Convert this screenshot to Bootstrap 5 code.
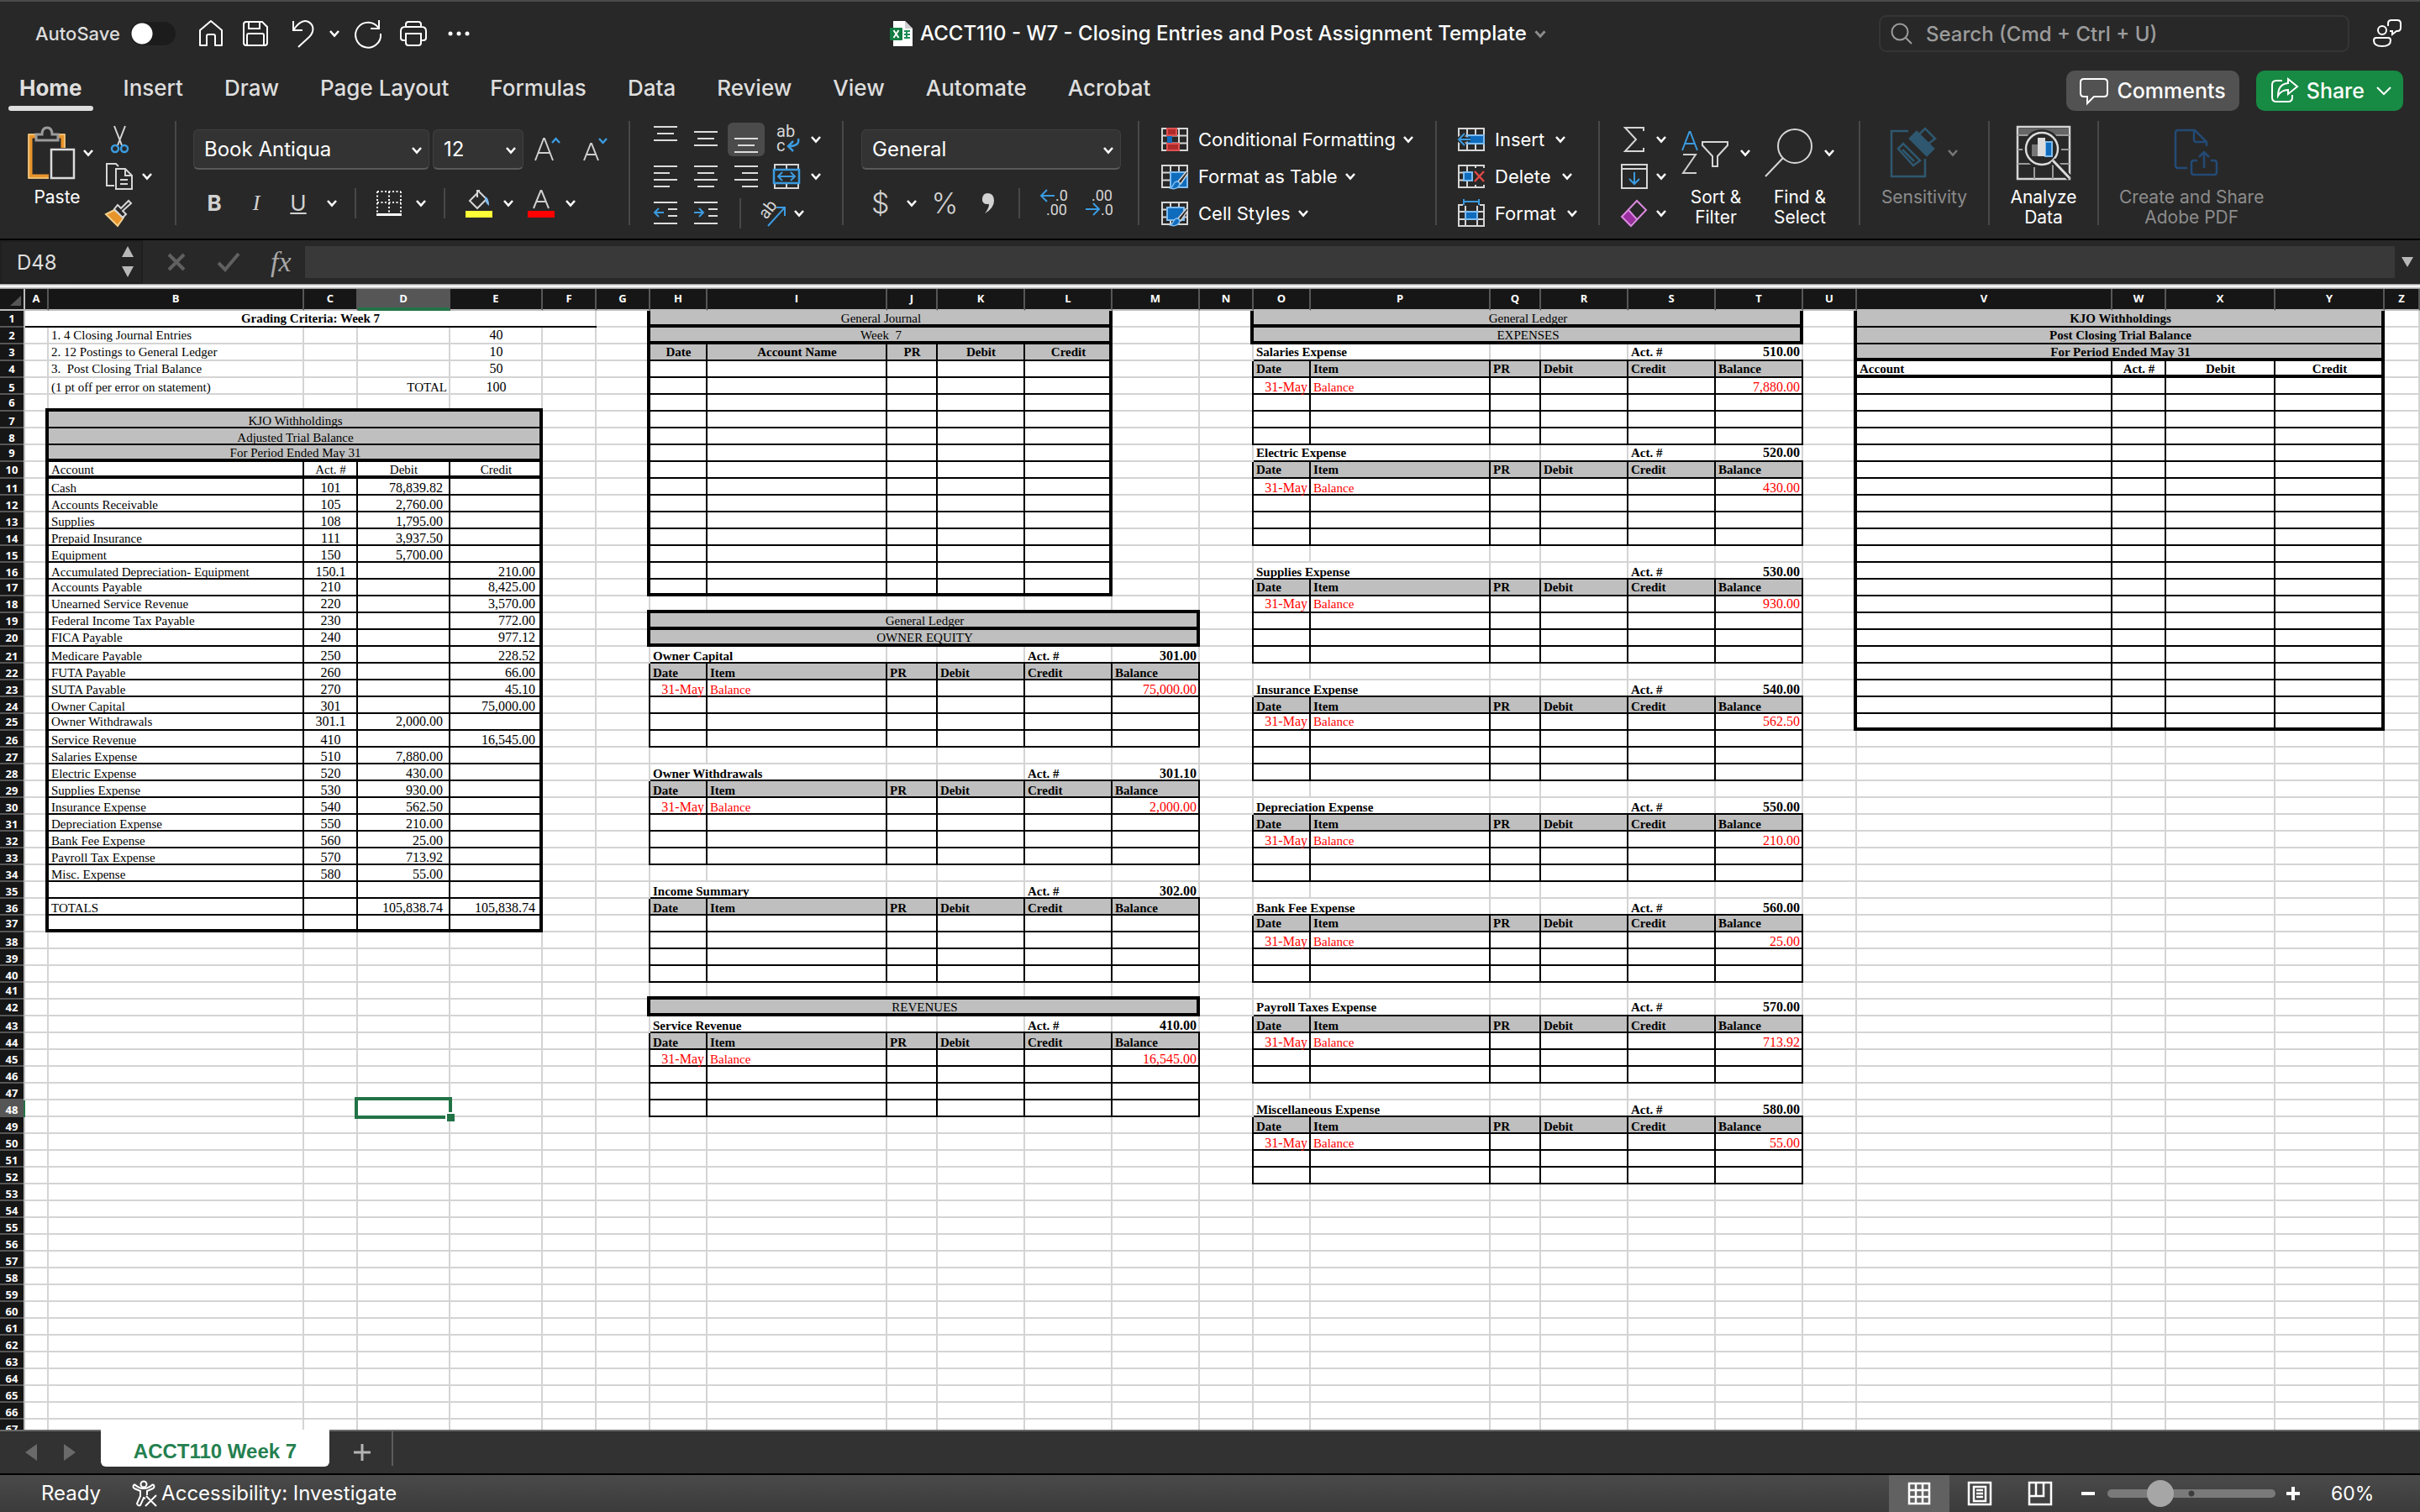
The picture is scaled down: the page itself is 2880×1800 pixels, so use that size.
<!DOCTYPE html>
<html lang="en">
<head>
<meta charset="utf-8">
<meta name="viewport" content="width=device-width, initial-scale=1">
<title>ACCT110 - W7 - Closing Entries and Post Assignment Template</title>
<link href="https://cdn.jsdelivr.net/npm/bootstrap@5.3.0/dist/css/bootstrap.min.css" rel="stylesheet">
<style>
  body { font-family: Inter, "Liberation Sans", sans-serif; background: #282828; color: #fff; font-size: 22px; line-height: 24px; }
  svg { display: block; flex: none; fill: none; stroke: #fff; stroke-width: 2; overflow: visible; }
  button { background: none; border: 0; padding: 0; color: inherit; font: inherit; display: flex; align-items: center; flex: none; }
  .s8 { margin-left: 8px; } .s12 { margin-left: 12px; } .s16 { margin-left: 16px; }
  .s20 { margin-left: 20px; } .s24 { margin-left: 24px; } .s28 { margin-left: 28px; } .s36 { margin-left: 36px; }

  /* title bar */
  .titlebar { height: 80px; border-top: 2px solid #4b4b4b; padding: 0 22px 2px 42px; }
  .side { flex: 1 1 0; }
  .autosave { color: #dcdcdc; font-weight: 500; font-size: 22px; }
  .switch-off { appearance: none; width: 54px; height: 28px; border-radius: 14px; background: radial-gradient(circle at 14px 14px, #fff 12px, #1c1c1c 13px); }
  .doc-title { font-size: 24px; font-weight: 500; white-space: nowrap; }
  .searchbox { width: 560px; height: 44px; border: 2px solid #353535; border-radius: 9px; padding: 0 12px; }
  .searchbox input { background: none; border: 0; outline: 0; width: 100%; font-weight: 500; font-size: 24px; color: #fff; padding: 0; }
  .searchbox input::placeholder { color: #9c9c9c; opacity: 1; }

  /* ribbon tabs */
  .tabs { height: 60px; padding: 0 20px 0 10px; }
  .tab-row { gap: 23px; }
  .tabs .ribbon-tab { color: #dedede; text-decoration: none; font-size: 26px; font-weight: 500; line-height: 32px; padding: 9px 13px 5px; border-bottom: 6px solid transparent; height: 52px; white-space: nowrap; }
  .tabs .ribbon-tab.on { font-weight: 700; position: relative; }
  .tabs .ribbon-tab.on::after { content: ""; position: absolute; left: 0; right: 0; bottom: -6px; height: 6px; border-radius: 3px; background: #dedede; }
  .pill { height: 48px; border-radius: 10px; font-size: 25px; font-weight: 500; padding: 0 16px; gap: 10px; }
  .pill-gray { background: #525252; }
  .pill-green { background: #178a43; padding: 0 14px 0 18px; }

  /* ribbon */
  .ribbon { height: 146px; padding-top: 4px; border-bottom: 2px solid #000; }
  .ribbon .rule { width: 2px; height: 124px; background: #484848; flex: none; }
  .ribbon .rule-s { width: 2px; height: 36px; background: #484848; flex: none; }
  .grp { flex: none; display: flex; white-space: nowrap; }
  .grp-2row { flex-direction: column; gap: 20px; padding-top: 10px; }
  .line-48 { display: flex; align-items: center; height: 48px; }
  .line-40 { display: flex; align-items: center; height: 40px; }
  .line-44 { display: flex; align-items: center; height: 44px; }
  .cell48 { width: 48px; height: 40px; justify-content: center; }
  .cell50 { width: 50px; height: 40px; justify-content: center; font-size: 26px; color: #d2d2d2; }
  .cell48 .pressed { background: #4b4b4b; border-radius: 6px; width: 44px; height: 40px; display: flex; align-items: center; justify-content: center; }
  .big { flex-direction: column; align-items: center; gap: 9px; padding-top: 6px; text-align: center; font-size: 21px; justify-content: flex-start; }
  .big .art { display: flex; align-items: center; height: 64px; }
  .dim { color: #8c8c8c; }
  .picker { position: relative; flex: none; }
  .picker select { appearance: none; width: 100%; height: 48px; background: #333; border: 1px solid #404040; border-bottom: 2px solid #5a5a5a; border-radius: 6px; color: #fff; font-size: 24px; padding: 0 12px; }
  .picker svg { position: absolute; right: 8px; top: 20px; pointer-events: none; }
  .glyph { font-size: 34px; line-height: 40px; color: #d2d2d2; font-weight: 300; }
  .w1 { width: 208px; } .w2 { width: 538px; } .w3 { width: 252px; } .w4 { width: 350px; } .w5 { width: 352px; }
  .w6 { width: 192px; } .w7 { width: 308px; } .w8 { width: 152px; } .w9 { width: 128px; }

  /* formula bar */
  .fbar { height: 52px; background: #282828; }
  .namebox { width: 170px; border: 2px solid #1f1f1f; background: #242424; }
  .namebox input { background: none; border: 0; outline: 0; width: 130px; color: #dedede; font-size: 24px; padding: 0 0 0 18px; }
  .fx { font-family: "Liberation Serif", serif; font-style: italic; font-size: 34px; color: #a8a8a8; }
  .finput { background: #393939; border: 0; outline: 0; height: 38px; color: #fff; padding: 0 8px; min-width: 0; }
  .strip { height: 6px; background: linear-gradient(#8f8f8f, #fff 40%, #f2f2f2 60%, #8a8a8a); flex: none; }

  /* sheet */
  .sheet-area { background: #fff; overflow: hidden; min-height: 0; }
  .sheet { table-layout: fixed; border-collapse: separate; border-spacing: 0; width: 100%; font-family: "Liberation Serif", serif; font-size: 15px; line-height: 18px; color: #000; }
  .sheet tr { height: 20px; }
  .sheet td { height: 20px; padding: 0 4px 0 3px; vertical-align: bottom; white-space: nowrap; overflow: hidden; }
  .sheet tr.lift td, .sheet tbody tr.lift th { vertical-align: top; }
  .sheet th { font-family: "Open Sans", sans-serif; font-weight: 700; font-size: 13px; color: #fff; background: #161616; text-align: center; padding: 0; overflow: hidden; }
  .sheet thead th { height: 26px; line-height: 22px; vertical-align: top; border-right: 2px solid #565656; border-bottom: 2px solid #bcbcbc; }
  .sheet tbody th { height: 20px; line-height: 18px; vertical-align: bottom; border-right: 2px solid #bcbcbc; box-shadow: inset 0 -2px #565656; }
  .sheet thead th:first-child { border-right-color: #bcbcbc; }
  .sheet thead th.sel { background: #565656; border-right-color: #565656; border-bottom: 4px solid #217346; }
  .sheet tbody th.sel { background: #565656; border-right-color: #217346; }
  .corner-mark { margin: 8px 3px 0 auto; width: 0; height: 0; border-left: 13px solid transparent; border-bottom: 12px solid #565656; }
  .r0b0 { box-shadow: inset -2px 0 #d4d4d4, inset 0 -2px #d4d4d4; }
  .r0b1 { box-shadow: inset 0 -2px #000, inset -2px 0 #d4d4d4; }
  .r0b2 { box-shadow: inset 0 -4px #000, inset -2px 0 #d4d4d4; }
  .r1b0 { box-shadow: inset -2px 0 #000, inset 0 -2px #d4d4d4; }
  .r1b1 { box-shadow: inset -2px 0 #000, inset 0 -2px #000; }
  .r1b2 { box-shadow: inset -2px 0 #000, inset 0 -4px #000; }
  .r2b0 { box-shadow: inset -4px 0 #000, inset 0 -2px #d4d4d4; }
  .r2b1 { box-shadow: inset -4px 0 #000, inset 0 -2px #000; }
  .r2b2 { box-shadow: inset -4px 0 #000, inset 0 -4px #000; }
  .sheet .fillg { background: #bfbfbf; }
  .sheet .ce { text-align: center; }
  .sheet .ri { text-align: right; }
  .sheet .acc { text-align: right; padding-right: 9px; }
  .sheet .nu { font-size: 16px; }
  .sheet .bo { font-weight: 700; }
  .sheet .rd { color: #f00; }
  .sheet .joint { position: relative; }
  .sheet .joint::after { content: ""; position: absolute; right: 0; bottom: 0; width: 4px; height: 4px; background: #000; }
  .sheet .active-cell { position: relative; overflow: visible; }
  .sheet .active-cell::before { content: ""; position: absolute; inset: -4px -2px -2px -4px; border: 4px solid #217346; }
  .sheet .active-cell::after { content: ""; position: absolute; right: -5px; bottom: -5px; width: 11px; height: 11px; background: #217346; border: 2px solid #fff; border-right: 0; border-bottom: 0; }

  /* sheet tabs and status bar */
  .sheetbar { height: 52px; background: #323232; border-top: 2px solid #6a6a6a; padding-left: 30px; }
  .sheet-tab { margin: -2px 0 0 30px; width: 272px; height: 44px; background: #fff; border-radius: 0 0 6px 6px; justify-content: center; font-family: "Liberation Sans", sans-serif; font-weight: 700; font-size: 24px; color: #24804f; padding-top: 8px; }
  .sheetbar .rule { width: 2px; height: 41px; background: #5c5c5c; }
  .statusbar { height: 46px; border-top: 2px solid #000; background: linear-gradient(#4a4a4a, #3b3b3b); padding-left: 49px; font-size: 24px; }
  .viewbtn { width: 72px; height: 44px; justify-content: center; }
  .viewbtn.on { background: #616161; }
  .zoomer { appearance: none; width: 200px; height: 32px; margin: 0 0 0 14px; background: none; }
  .zoomer::-webkit-slider-runnable-track { height: 10px; border-radius: 5px; background: radial-gradient(circle at 50% 50%, #3c3c3c 3px, #7a7a7a 4px); }
  .zoomer::-webkit-slider-thumb { appearance: none; width: 32px; height: 32px; margin-top: -11px; border-radius: 50%; background: #a6a6a6; }
  .zoom-value { width: 106px; font-size: 23px; }
</style>
</head>
<body class="d-flex flex-column vh-100 overflow-hidden">

<svg width="0" height="0" class="position-absolute" aria-hidden="true">
  <symbol id="chev" viewBox="0 0 14 10"><path d="M2 2l5 5.500 5-5.500" stroke-width="2.600"/></symbol>
  <symbol id="gridbase" viewBox="0 0 32 30"><path d="M1 2h30v26H1zM1 10.500h30M1 19.500h30M11 2v26M21 2v26" stroke="#d6d6d6"/></symbol>
  <symbol id="brush" viewBox="0 0 24 24"><path d="M23 1L12 14l3 3L24 4z" fill="#282828" stroke="#d6d6d6" stroke-width="1.500"/><path d="M11 14c-5 0-4 6-8 8 6 2 11-1 11-6z" fill="#0f6cbd" stroke="#7fbcf0" stroke-width="1.500"/></symbol>
</svg>

<header class="titlebar d-flex align-items-center flex-shrink-0">
  <div class="side d-flex align-items-center">
    <label class="autosave" for="autosave">AutoSave</label>
    <input type="checkbox" id="autosave" class="switch-off s12">
    <button class="s28" aria-label="Home"><svg width="28" height="32" viewBox="0 0 28 32"><path d="M1 30V12L14 1l13 11v18h-8V19q0-2-2-2h-6q-2 0-2 2v11z" stroke-linejoin="round"/></svg></button>
    <button class="s24" aria-label="Save"><svg width="30" height="30" viewBox="0 0 30 30"><path d="M4 1h19l6 6v19q0 3-3 3H4q-3 0-3-3V4q0-3 3-3zM7 1v8h13V1M5 29V17q0-2 2-2h16q2 0 2 2v12"/></svg></button>
    <button class="s28" aria-label="Undo"><svg width="28" height="34" viewBox="0 0 28 34"><path d="M2 2v11h11M2 13C8 4 14 0 20 3s8 11 1 18L8 33"/></svg></button>
    <button class="s16" aria-label="Undo list"><svg width="14" height="10"><use href="#chev"/></svg></button>
    <button class="s16" aria-label="Redo"><svg width="34" height="34" viewBox="0 0 34 34"><path d="M30 1v10H20M30 11a15 15 0 1 0 2 6"/></svg></button>
    <button class="s20" aria-label="Print"><svg width="34" height="32" viewBox="0 0 34 32"><path d="M8 8V5q0-3 3-3h12q3 0 3 3v3M8 24H5q-3 0-3-3v-8q0-5 5-5h20q5 0 5 5v8q0 3-3 3h-3M8 16h18v11q0 3-3 3H11q-3 0-3-3z"/></svg></button>
    <button class="s24" aria-label="More"><svg width="26" height="6" viewBox="0 0 26 6"><g fill="#fff" stroke="none"><circle cx="3" cy="3" r="2.500"/><circle cx="13" cy="3" r="2.500"/><circle cx="23" cy="3" r="2.500"/></g></svg></button>
  </div>
  <div class="d-flex align-items-center">
    <svg width="28" height="30" viewBox="0 0 28 30"><path d="M4 0h14l9 9v21H4z" fill="#fff" stroke="none"/><path d="M18 0l9 9h-9z" fill="#cfcfcf" stroke="none"/><path d="M17 12h7M17 16h7M17 20h7M20 11v10" stroke="#1e8e55" stroke-width="2"/><rect x="0" y="8" width="15" height="15" rx="1" fill="#107c41" stroke="none"/><path d="M4.500 11l6 9M10.500 11l-6 9" stroke-width="2"/></svg>
    <h1 class="doc-title m-0 ms-2">ACCT110 - W7 - Closing Entries and Post Assignment Template</h1>
    <button class="s8" aria-label="Document menu"><svg width="16" height="11" viewBox="0 0 14 10" style="stroke:#8c8c8c"><use href="#chev"/></svg></button>
  </div>
  <div class="side d-flex align-items-center justify-content-end">
    <div class="searchbox d-flex align-items-center gap-3">
      <svg width="26" height="26" viewBox="0 0 26 26" style="stroke:#9c9c9c"><circle cx="11" cy="11" r="9.500"/><path d="M18 18l7 7"/></svg>
      <input type="text" aria-label="Search" placeholder="Search (Cmd + Ctrl + U)">
    </div>
    <button class="s28" aria-label="Collaborators"><svg width="34" height="34" viewBox="0 0 34 34"><circle cx="11" cy="13" r="5"/><path d="M4 22h14q3 0 3 3 0 7-10 7T1 25q0-3 3-3zM18 8V5q0-4 4-4h7q4 0 4 4v5q0 4-4 4h-1l-5 4v-4h-3"/></svg></button>
  </div>
</header>

<nav class="tabs d-flex flex-shrink-0">
  <div class="tab-row d-flex align-items-start me-auto">
    <a href="#" class="ribbon-tab on">Home</a><a href="#" class="ribbon-tab">Insert</a><a href="#" class="ribbon-tab">Draw</a><a href="#" class="ribbon-tab">Page Layout</a><a href="#" class="ribbon-tab">Formulas</a><a href="#" class="ribbon-tab">Data</a><a href="#" class="ribbon-tab">Review</a><a href="#" class="ribbon-tab">View</a><a href="#" class="ribbon-tab">Automate</a><a href="#" class="ribbon-tab">Acrobat</a>
  </div>
  <div class="d-flex pt-1">
    <button class="pill pill-gray"><svg width="34" height="32" viewBox="0 0 34 32"><path d="M5 2h24q4 0 4 4v13q0 4-4 4H17l-8 8v-8H5q-4 0-4-4V6q0-4 4-4z"/></svg>Comments</button>
    <button class="pill pill-green s20"><svg width="32" height="30" viewBox="0 0 32 30"><path d="M13 3H6Q1 3 1 8v15q0 5 5 5h14q5 0 5-5v-3M20 1l11 9-11 9v-5q-8 0-12 7 0-14 12-15z"/></svg>Share<svg width="18" height="12" viewBox="0 0 18 12" class="ms-1"><path d="M1 2l8 8 8-8"/></svg></button>
  </div>
</nav>

<section class="ribbon d-flex flex-shrink-0 align-items-start">
  <div class="grp w1" style="padding-left:32px">
    <button class="big"><span class="art"><svg width="58" height="64" viewBox="0 0 58 64"><path d="M14 12H4v48h22M36 12h7v14" stroke="#e8942c" stroke-width="5"/><path d="M12 10H2v52h24M36 10h9v16" stroke="#f6d18b" stroke-width="1.500"/><path d="M11 17v-7h7q0-8 6-8t6 8h7v7z" fill="#282828" stroke="#9a9a9a" stroke-width="3"/><path d="M29 28h27v34H29z" fill="#282828" stroke="#dcdcdc" stroke-width="2.500"/></svg><svg class="s8" width="14" height="10"><use href="#chev"/></svg></span><span class="pe-2">Paste</span></button>
    <div class="s12">
      <div class="line-44"><button aria-label="Cut"><svg width="36" height="34" viewBox="0 0 36 34"><path d="M12 1l9 23M25 1l-9 23" stroke="#d6d6d6"/><circle cx="13" cy="28" r="4" stroke="#3b9be0" stroke-width="2.500"/><circle cx="24" cy="28" r="4" stroke="#3b9be0" stroke-width="2.500"/></svg></button></div>
      <div class="line-44"><button aria-label="Copy"><svg width="36" height="34" viewBox="0 0 36 34"><path d="M12 28H3V2h11l3 3" stroke="#d6d6d6"/><path d="M14 8h11l8 8v16H14zM25 8v8h8M19 21h9M19 26h9" stroke="#d6d6d6"/></svg></button><button class="s8" aria-label="Copy menu"><svg width="14" height="10"><use href="#chev"/></svg></button></div>
      <div class="line-44"><button aria-label="Format painter"><svg width="36" height="34" viewBox="0 0 36 34"><path d="M2 18l14 14 7-10-11-9z" fill="#e8942c" stroke="#f6d18b"/><path d="M12 12l10 10 4-4-4-4 10-9-3-3-9 9-4-4z" fill="#282828" stroke="#d6d6d6"/></svg></button></div>
    </div>
  </div>
  <div class="rule"></div>

  <div class="grp grp-2row w2" style="padding-left:20px">
    <div class="line-48">
      <div class="picker" style="width:281px"><select aria-label="Font"><option>Book Antiqua</option></select><svg width="14" height="10"><use href="#chev"/></svg></div>
      <div class="picker ms-1" style="width:108px"><select aria-label="Font size"><option>12</option></select><svg width="14" height="10"><use href="#chev"/></svg></div>
      <button class="s12" aria-label="Increase font size"><svg width="34" height="34" viewBox="0 0 34 34"><path d="M2 30L12 4h1l10 26M6 21h13" stroke="#cfcfcf"/><path d="M22 9l4.500-5 4.500 5" stroke="#3b9be0" stroke-width="2.500"/></svg></button>
      <button class="s24" aria-label="Decrease font size"><svg width="32" height="34" viewBox="0 0 32 34"><path d="M2 30L10 10h1l8 20M5 23h11" stroke="#cfcfcf"/><path d="M20 4l4.500 5 4.500-5" stroke="#3b9be0" stroke-width="2.500"/></svg></button>
    </div>
    <div class="line-40">
      <button class="cell50"><b>B</b></button><button class="cell50"><i style="font-family:'Liberation Serif',serif">I</i></button><button class="cell50"><u>U</u></button>
      <button class="s8" aria-label="Underline menu"><svg width="14" height="10"><use href="#chev"/></svg></button>
      <div class="rule-s s20"></div>
      <button class="s24" aria-label="Borders"><svg width="30" height="32" viewBox="0 0 30 32"><path d="M1 2h28M1 15h28M1 2v26M15 2v26M29 2v26" stroke-dasharray="2 2.500"/><path d="M0 29.500h30" stroke-width="3"/></svg></button>
      <button class="s16" aria-label="Borders menu"><svg width="14" height="10"><use href="#chev"/></svg></button>
      <div class="rule-s s20"></div>
      <button class="s24" aria-label="Fill colour"><svg width="32" height="34" viewBox="0 0 32 34"><path d="M14 5L5 14l9 9 11-11-9-9V1M14 1v9" stroke="#d6d6d6"/><path d="M23 9q5 1 5 11-5-3-5-11z" fill="#7fbcf0" stroke="none"/><path d="M0 26h32v8H0z" fill="#ffff37" stroke="none"/></svg></button>
      <button class="s12" aria-label="Fill menu"><svg width="14" height="10"><use href="#chev"/></svg></button>
      <button class="s16" aria-label="Font colour"><svg width="32" height="34" viewBox="0 0 32 34"><path d="M7 23l8.500-21h1L25 23M10 15h12" stroke="#cfcfcf"/><path d="M0 26h32v8H0z" fill="#f00" stroke="none"/></svg></button>
      <button class="s12" aria-label="Font colour menu"><svg width="14" height="10"><use href="#chev"/></svg></button>
    </div>
  </div>
  <div class="rule"></div>

  <div class="grp flex-column w3" style="padding-left:18px">
    <div class="line-44">
      <button class="cell48" aria-label="Top align"><svg width="28" height="32" viewBox="0 0 28 32"><path d="M0 1h28M4 9h20M0 17h28" stroke="#dcdcdc"/></svg></button>
      <button class="cell48" aria-label="Middle align"><svg width="28" height="32" viewBox="0 0 28 32"><path d="M0 7h28M4 15h20M0 23h28" stroke="#dcdcdc"/></svg></button>
      <button class="cell48" aria-label="Bottom align"><span class="pressed"><svg width="28" height="32" viewBox="0 0 28 32"><path d="M0 15h28M4 23h20M0 31h28" stroke="#dcdcdc"/></svg></span></button>
      <button class="s8" aria-label="Wrap text"><svg width="32" height="40" viewBox="0 0 32 40"><g stroke="none" fill="#d6d6d6" font-family="Roboto, sans-serif" font-size="20"><text x="4" y="17">ab</text><text x="4" y="34">c</text></g><path d="M30 19q2 9-11 9M24 22l-6 6 6 6" stroke="#3b9be0" stroke-width="2.500"/></svg></button>
      <button class="s12" aria-label="Wrap menu"><svg width="14" height="10"><use href="#chev"/></svg></button>
    </div>
    <div class="line-44">
      <button class="cell48" aria-label="Align left"><svg width="28" height="28" viewBox="0 0 28 28"><path d="M0 2h28M0 10h19M0 18h28M0 26h19" stroke="#dcdcdc"/></svg></button>
      <button class="cell48" aria-label="Centre"><svg width="28" height="28" viewBox="0 0 28 28"><path d="M0 2h28M4 10h20M0 18h28M4 26h20" stroke="#dcdcdc"/></svg></button>
      <button class="cell48" aria-label="Align right"><svg width="28" height="28" viewBox="0 0 28 28"><path d="M0 2h28M9 10h19M0 18h28M9 26h19" stroke="#dcdcdc"/></svg></button>
      <button class="s8" aria-label="Merge and centre"><svg width="32" height="32" viewBox="0 0 32 32"><path d="M2 2h28v28H2zM16 2v6M16 24v6" stroke="#d6d6d6"/><path d="M1 8h30v16H1z" fill="#282828" stroke="#3b9be0" stroke-width="2.500"/><path d="M6 16h20M11 11l-5 5 5 5M21 11l5 5-5 5" stroke="#3b9be0"/></svg></button>
      <button class="s12" aria-label="Merge menu"><svg width="14" height="10"><use href="#chev"/></svg></button>
    </div>
    <div class="line-44">
      <button class="cell48" aria-label="Decrease indent"><svg width="28" height="28" viewBox="0 0 28 28"><path d="M0 1h28M17 9h11M17 17h11M0 26h28" stroke="#dcdcdc"/><path d="M1 13h11M6 8l-5 5 5 5" stroke="#3b9be0"/></svg></button>
      <button class="cell48" aria-label="Increase indent"><svg width="28" height="28" viewBox="0 0 28 28"><path d="M0 1h28M17 9h11M17 17h11M0 26h28" stroke="#dcdcdc"/><path d="M0 13h11M6 8l5 5-5 5" stroke="#3b9be0"/></svg></button>
      <div class="rule-s s16"></div>
      <button class="s20" aria-label="Orientation"><svg width="34" height="34" viewBox="0 0 34 34"><text x="0" y="0" transform="translate(10 25) rotate(-52)" font-family="Roboto, sans-serif" font-size="20" fill="#d6d6d6" stroke="none">ab</text><path d="M12 32l20-22M22 10h10v10" stroke="#3b9be0"/></svg></button>
      <button class="s8" aria-label="Orientation menu"><svg width="14" height="10"><use href="#chev"/></svg></button>
    </div>
  </div>
  <div class="rule"></div>

  <div class="grp grp-2row w4" style="padding-left:21px">
    <div class="line-48"><div class="picker" style="width:309px"><select aria-label="Number format"><option>General</option></select><svg width="14" height="10"><use href="#chev"/></svg></div></div>
    <div class="line-40">
      <button class="glyph s12">$</button><button class="s20" aria-label="Currency menu"><svg width="14" height="10"><use href="#chev"/></svg></button>
      <button class="glyph s16">%</button>
      <button class="s28" aria-label="Comma style"><svg width="16" height="26" viewBox="0 0 16 26"><path d="M7 1q8 0 8 9 0 9-11 15 5-6 5-11Q0 15 1 7q1-6 6-6z" fill="#d2d2d2" stroke="none"/></svg></button>
      <div class="rule-s s28"></div>
      <button class="s24" aria-label="Increase decimal"><svg width="34" height="38" viewBox="0 0 34 38"><g stroke="none" fill="#d6d6d6" font-family="Roboto, sans-serif" font-size="18"><text x="18" y="16">.0</text><text x="7" y="33">.00</text></g><path d="M1 10h16M8 3l-7 7 7 7" stroke="#3b9be0"/></svg></button>
      <button class="s20" aria-label="Decrease decimal"><svg width="34" height="38" viewBox="0 0 34 38"><g stroke="none" fill="#d6d6d6" font-family="Roboto, sans-serif" font-size="18"><text x="7" y="16">.00</text><text x="18" y="33">.0</text></g><path d="M0 26h16M9 19l7 7-7 7" stroke="#3b9be0"/></svg></button>
    </div>
  </div>
  <div class="rule"></div>

  <div class="grp flex-column w5" style="padding-left:26px">
    <button class="line-44"><svg width="32" height="30" viewBox="0 0 32 30"><use href="#gridbase"/><path d="M7 2h11v8H7zM7 20h14v8H7z" fill="#b02a2a" stroke="#e05050"/><path d="M7 11h6v8H7z" fill="#0f6cbd" stroke="none"/></svg><span class="s12">Conditional Formatting</span><svg class="s8" width="14" height="10"><use href="#chev"/></svg></button>
    <button class="line-44"><svg width="32" height="30" viewBox="0 0 32 30"><use href="#gridbase"/><path d="M11 10h20v18H11z" fill="#0f6cbd" stroke="#7fbcf0"/><use href="#brush" x="8" y="7" width="24" height="24"/></svg><span class="s12">Format as Table</span><svg class="s8" width="14" height="10"><use href="#chev"/></svg></button>
    <button class="line-44"><svg width="32" height="30" viewBox="0 0 32 30"><use href="#gridbase"/><path d="M7 8h20v15H7z" fill="#0f6cbd" stroke="#7fbcf0"/><use href="#brush" x="8" y="7" width="24" height="24"/></svg><span class="s12">Cell Styles</span><svg class="s8" width="14" height="10"><use href="#chev"/></svg></button>
  </div>
  <div class="rule"></div>

  <div class="grp flex-column w6" style="padding-left:25px">
    <button class="line-44"><svg width="32" height="30" viewBox="0 0 32 30"><use href="#gridbase"/><path d="M11 10h20v10H11z" fill="#0f6cbd" stroke="#7fbcf0"/><path d="M0 15h15M8 8l-7 7 7 7" stroke="#282828" stroke-width="5"/><path d="M1 15h14M8 8l-7 7 7 7" stroke="#3b9be0"/></svg><span class="s12">Insert</span><svg class="s12" width="14" height="10"><use href="#chev"/></svg></button>
    <button class="line-44"><svg width="32" height="30" viewBox="0 0 32 30"><use href="#gridbase"/><path d="M17 5h16v20H17z" fill="#282828" stroke="none"/><path d="M7 10h10v10H7z" fill="#0f6cbd" stroke="#7fbcf0"/><path d="M20 9l11 12M31 9L20 21" stroke="#e04848" stroke-width="2.500"/></svg><span class="s12">Delete</span><svg class="s12" width="14" height="10"><use href="#chev"/></svg></button>
    <button class="line-44"><svg width="32" height="34" viewBox="0 0 32 34"><path d="M6 7H1v25h30V7h-5M1 15h30M1 24h30M9 8v24M23 8v24" stroke="#d6d6d6"/><path d="M9 15h14v9H9z" fill="#0f6cbd" stroke="#7fbcf0"/><path d="M7 3h18M7 0v7M25 0v7" stroke="#3b9be0"/></svg><span class="s12">Format</span><svg class="s12" width="14" height="10"><use href="#chev"/></svg></button>
  </div>
  <div class="rule"></div>

  <div class="grp w7" style="padding-left:24px">
    <div>
      <div class="line-44"><button aria-label="AutoSum"><svg width="34" height="30" viewBox="0 0 34 30"><path d="M28 5V1H6l13 14L6 29h22v-4" stroke="#d6d6d6"/></svg></button><button class="s8" aria-label="AutoSum menu"><svg width="14" height="10"><use href="#chev"/></svg></button></div>
      <div class="line-44"><button aria-label="Fill"><svg width="34" height="30" viewBox="0 0 34 30"><path d="M2 1h30v28H2zM2 6h30" stroke="#d6d6d6"/><path d="M17 10v14M11 18l6 6 6-6" stroke="#3b9be0"/></svg></button><button class="s8" aria-label="Fill menu"><svg width="14" height="10"><use href="#chev"/></svg></button></div>
      <div class="line-44"><button aria-label="Clear"><svg width="34" height="32" viewBox="0 0 34 32"><path d="M2 20l8-8 10 10-9 9z" fill="#9b2fa0" stroke="none"/><path d="M2 20L20 1l11 11-18 19zM10 12l10 11" stroke="#dc8ae0"/></svg></button><button class="s8" aria-label="Clear menu"><svg width="14" height="10"><use href="#chev"/></svg></button></div>
    </div>
    <button class="big s16"><span class="art"><svg width="58" height="60" viewBox="0 0 58 60"><path d="M2 27L10.500 5h1L20 27M5 19h12" stroke="#3b9be0"/><path d="M3 32h15L3 54h16" stroke="#cfcfcf"/><path d="M26 17h30v4L44 34v12h-6V34L26 21z" stroke="#d6d6d6"/></svg><svg class="s12" width="14" height="10"><use href="#chev"/></svg></span><span>Sort &amp;<br>Filter</span></button>
    <button class="big s16"><span class="art"><svg width="58" height="60" viewBox="0 0 58 60"><circle cx="36" cy="22" r="20" stroke="#d6d6d6"/><path d="M22 36L1 58" stroke="#d6d6d6"/></svg><svg class="s12" width="14" height="10"><use href="#chev"/></svg></span><span>Find &amp;<br>Select</span></button>
  </div>
  <div class="rule"></div>

  <div class="grp w8 justify-content-center">
    <button class="big dim" disabled><span class="art"><svg width="56" height="62" viewBox="0 0 56 62"><g stroke="#2f5870" stroke-width="2.500"><path d="M22 5H2v54h40V38"/><path d="M10 26l6-6 20 20-8 6zM15 27l14 14"/><path d="M24 14l8-8 20 20-8 8z" fill="#2f5870"/><path d="M34 10l8-8 12 12-8 6z"/></g></svg><svg class="s12" width="14" height="10" style="stroke:#777"><use href="#chev"/></svg></span>Sensitivity</button>
  </div>
  <div class="rule"></div>

  <div class="grp w9 justify-content-center">
    <button class="big"><span class="art"><svg width="64" height="64" viewBox="0 0 64 64"><path d="M1 1h62v62H1z" stroke="#d6d6d6" stroke-width="2.500"/><path d="M2 3h60v7H2z" fill="#666" stroke="none"/><path d="M1 11h62M1 28h12M52 28h11M1 45h62M21 49v14M43 45v18" stroke="#9a9a9a"/><circle cx="30" cy="27" r="22" fill="#282828" stroke="#282828"/><circle cx="30" cy="27" r="19" stroke="#dcdcdc" stroke-width="2.500"/><path d="M18 22h8v14h-8z" fill="#777" stroke="none"/><path d="M34 19h8v17h-8z" fill="#0f6cbd" stroke="#7fbcf0"/><path d="M25 14h9v22h-9z" fill="#dcdcdc" stroke="none"/><path d="M43 41l20 21" stroke="#282828" stroke-width="7"/><path d="M43 41l20 21" stroke="#dcdcdc" stroke-width="3"/></svg></span><span>Analyze<br>Data</span></button>
  </div>
  <div class="rule"></div>

  <div class="grp s24">
    <button class="big dim" disabled><span class="art"><svg width="52" height="60" viewBox="0 0 52 60" class="s12"><g stroke="#234a75" stroke-width="2.500" stroke-linejoin="round"><path d="M15 48H4q-3 0-3-3V6q0-3 3-3h20l14 14v5M23 3v11q0 3 3 3h12"/><path d="M27 39h-4q-3 0-3 3v11q0 3 3 3h24q3 0 3-3V42q0-3-3-3h-4M35 48V30M29 35l6-6 6 6"/></g></svg></span><span>Create and Share<br>Adobe PDF</span></button>
  </div>
</section>

<div class="fbar d-flex align-items-center flex-shrink-0">
  <div class="namebox d-flex align-items-center align-self-stretch">
    <input type="text" aria-label="Name box" value="D48">
    <svg class="s12" width="16" height="38" viewBox="0 0 16 38"><path d="M8 0l7 13H1zM8 37l7-13H1z" fill="#b8b8b8" stroke="none"/></svg>
  </div>
  <button class="s28" aria-label="Cancel"><svg width="24" height="22" viewBox="0 0 24 22"><path d="M3 2l18 18M21 2L3 20" style="stroke:#606060;stroke-width:4"/></svg></button>
  <button class="s36" aria-label="Enter"><svg width="28" height="22" viewBox="0 0 28 22"><path d="M2 12l8 8L26 1" style="stroke:#606060;stroke-width:4"/></svg></button>
  <button class="fx s36">fx</button>
  <input type="text" class="finput s16 flex-fill" aria-label="Formula bar">
  <button class="s8 me-2" aria-label="Expand formula bar"><svg width="14" height="12" viewBox="0 0 14 12"><path d="M0 0h14L7 12z" fill="#b8b8b8" stroke="none"/></svg></button>
</div>
<div class="strip"></div>

<main class="sheet-area flex-fill">
  <table class="sheet" id="sheet"></table>
</main>

<footer class="flex-shrink-0">
  <div class="sheetbar d-flex align-items-start">
    <button class="align-self-center" aria-label="Previous sheet"><svg width="14" height="20" viewBox="0 0 14 20"><path d="M14 0v20L0 10z" fill="#6a6a6a" stroke="none"/></svg></button>
    <button class="align-self-center" style="margin-left:32px" aria-label="Next sheet"><svg width="14" height="20" viewBox="0 0 14 20"><path d="M0 0v20l14-10z" fill="#6a6a6a" stroke="none"/></svg></button>
    <button class="sheet-tab">ACCT110 Week 7</button>
    <button class="s28 align-self-center" aria-label="Add sheet"><svg width="22" height="22" viewBox="0 0 22 22"><path d="M11 1v20M1 11h20" stroke="#b4b4b4" stroke-width="3"/></svg></button>
    <div class="rule s24"></div>
  </div>
  <div class="statusbar d-flex align-items-center">
    <span>Ready</span>
    <button class="s36"><svg width="32" height="32" viewBox="0 0 32 32"><circle cx="15" cy="5" r="3.500"/><path d="M4 5q-3 3 0 5l7 3v6L7 28q1 3 4 2l4-9 2 1M26 5q3 3 0 5l-7 3v5M4 5q5 5 11 5t11-5M18 19l12 12M30 18L17 31"/></svg><span class="ms-1">Accessibility: Investigate</span></button>
    <button class="viewbtn on ms-auto" aria-label="Normal view"><svg width="28" height="28" viewBox="0 0 28 28"><path d="M2 2h24v24H2zM2 10h24M2 18h24M10 2v24M18 2v24" stroke-width="2.500"/></svg></button>
    <button class="viewbtn" aria-label="Page layout view"><svg width="28" height="28" viewBox="0 0 28 28"><path d="M1 1h26v26H1zM7 6h14v17H7zM10 10h8M10 14h8M10 18h8" stroke-width="2.500"/></svg></button>
    <button class="viewbtn" aria-label="Page break view"><svg width="28" height="28" viewBox="0 0 28 28"><path d="M1 1h26v26H1zM1 17h17V1M9 1v16" stroke-width="2.500"/></svg></button>
    <button class="s12" aria-label="Zoom out"><svg width="18" height="18" viewBox="0 0 18 18"><path d="M1 9h16" stroke-width="4"/></svg></button>
    <input type="range" class="zoomer" min="0" max="100" value="28" aria-label="Zoom">
    <button class="s12" aria-label="Zoom in"><svg width="18" height="18" viewBox="0 0 18 18"><path d="M1 9h16M9 1v16" stroke-width="4"/></svg></button>
    <button class="s36 zoom-value">60%</button>
  </div>
</footer>

<script>
  const NAMES = 'ABCDEFGHIJKLMNOPQRSTUVWXYZ';
  const WIDTHS = [28,304,64,110,110,64,64,68,214,60,104,104,104,64,68,214,60,104,104,104,64,304,64,130,130];
  const LAST = 67;
  const col = l => NAMES.indexOf(l);
  const cells = {};
  for (let r = 0; r <= LAST; r++) for (let c = -1; c < 26; c++) cells[r + ':' + c] = { t: '', k: '', span: 1, R: 0, B: 0 };
  const at = (r, c) => cells[r + ':' + c];
  const put = (r, l, t, k = '', span = 1) => Object.assign(at(r, col(l)), { t, k: at(r, col(l)).k + ' ' + k, span });

  // Thin rules round every cell of a block
  function lattice(r1, r2, a, b) {
    for (let r = r1; r <= r2; r++) for (let c = col(a) - 1; c <= col(b); c++) at(r, c).R = Math.max(at(r, c).R, 1);
    for (let r = r1 - 1; r <= r2; r++) for (let c = col(a); c <= col(b); c++) at(r, c).B = Math.max(at(r, c).B, 1);
  }
  // Thick outline round a block
  function outline(r1, r2, a, b) {
    for (let r = r1; r <= r2; r++) { at(r, col(a) - 1).R = 2; at(r, col(b)).R = 2; }
    for (let c = col(a); c <= col(b); c++) { at(r1 - 1, c).B = 2; at(r2, c).B = 2; }
    at(r1 - 1, col(a) - 1).k += ' joint';
  }
  const banner = (r, a, b, t, k = '') => put(r, a, t, 'fillg ce ' + k, col(b) - col(a) + 1);

  // Grading criteria
  put(1, 'A', 'Grading Criteria: Week 7', 'bo ce', 6); at(1, 0).B = 1;
  [['1. 4 Closing Journal Entries', 40], ['2. 12 Postings to General Ledger', 10], ['3.&nbsp; Post Closing Trial Balance', 50], ['(1 pt off per error on statement)', 100]]
    .forEach(([t, n], i) => { put(i + 2, 'B', t); put(i + 2, 'E', n, 'ce nu'); });
  put(5, 'D', 'TOTAL', 'ri');

  // Adjusted trial balance
  lattice(7, 37, 'B', 'E'); outline(7, 9, 'B', 'E'); outline(10, 10, 'B', 'E'); outline(11, 37, 'B', 'E');
  banner(7, 'B', 'E', 'KJO Withholdings'); banner(8, 'B', 'E', 'Adjusted Trial Balance'); banner(9, 'B', 'E', 'For Period Ended May 31');
  put(10, 'B', 'Account'); put(10, 'C', 'Act. #', 'ce'); put(10, 'D', 'Debit', 'ce'); put(10, 'E', 'Credit', 'ce');
  [['Cash', '101', '78,839.82'], ['Accounts Receivable', '105', '2,760.00'], ['Supplies', '108', '1,795.00'], ['Prepaid Insurance', '111', '3,937.50'],
   ['Equipment', '150', '5,700.00'], ['Accumulated Depreciation- Equipment', '150.1', '', '210.00'], ['Accounts Payable', '210', '', '8,425.00'],
   ['Unearned Service Revenue', '220', '', '3,570.00'], ['Federal Income Tax Payable', '230', '', '772.00'], ['FICA Payable', '240', '', '977.12'],
   ['Medicare Payable', '250', '', '228.52'], ['FUTA Payable', '260', '', '66.00'], ['SUTA Payable', '270', '', '45.10'], ['Owner Capital', '301', '', '75,000.00'],
   ['Owner Withdrawals', '301.1', '2,000.00'], ['Service Revenue', '410', '', '16,545.00'], ['Salaries Expense', '510', '7,880.00'], ['Electric Expense', '520', '430.00'],
   ['Supplies Expense', '530', '930.00'], ['Insurance Expense', '540', '562.50'], ['Depreciation Expense', '550', '210.00'], ['Bank Fee Expense', '560', '25.00'],
   ['Payroll Tax Expense', '570', '713.92'], ['Misc. Expense', '580', '55.00'], ['', ''], ['TOTALS', '', '105,838.74', '105,838.74']]
    .forEach(([name, no, d = '', cr = ''], i) => { const r = 11 + i; put(r, 'B', name); put(r, 'C', no, 'ce nu'); put(r, 'D', d, 'acc nu'); put(r, 'E', cr, 'acc nu'); });

  // General journal
  lattice(3, 17, 'H', 'L'); outline(1, 1, 'H', 'L'); outline(2, 2, 'H', 'L'); outline(3, 17, 'H', 'L'); 
  for (const c of 'HIJKL') at(2, col(c)).B = 2;
  banner(1, 'H', 'L', 'General Journal'); banner(2, 'H', 'L', 'Week&nbsp; 7');
  ['Date', 'Account Name', 'PR', 'Debit', 'Credit'].forEach((t, i) => put(3, 'HIJKL'[i], t, 'fillg bo ce'));

  // Ledger accounts
  function account(row, first, name, no, balance, body) {
    const L = NAMES.slice(col(first), col(first) + 6);
    lattice(row + 1, row + 1 + body, L[0], L[5]);
    put(row, L[0], name, 'bo', 2); put(row, L[4], 'Act. #', 'bo'); put(row, L[5], no, 'bo ri nu');
    ['Date', 'Item', 'PR', 'Debit', 'Credit', 'Balance'].forEach((t, i) => put(row + 1, L[i], t, 'fillg bo'));
    if (balance) { put(row + 2, L[0], '31-May', 'rd ri nu'); put(row + 2, L[1], 'Balance', 'rd'); put(row + 2, L[5], balance, 'rd ri nu'); }
  }
  outline(19, 19, 'H', 'M'); outline(20, 20, 'H', 'M'); outline(42, 42, 'H', 'M');
  banner(19, 'H', 'M', 'General Ledger'); banner(20, 'H', 'M', 'OWNER EQUITY'); banner(42, 'H', 'M', 'REVENUES');
  account(21, 'H', 'Owner Capital', '301.00', '75,000.00', 4);
  account(28, 'H', 'Owner Withdrawals', '301.10', '2,000.00', 4);
  account(35, 'H', 'Income Summary', '302.00', '', 4);
  account(43, 'H', 'Service Revenue', '410.00', '16,545.00', 4);
  outline(1, 1, 'O', 'T'); outline(2, 2, 'O', 'T');
  banner(1, 'O', 'T', 'General Ledger'); banner(2, 'O', 'T', 'EXPENSES');
  account(3, 'O', 'Salaries Expense', '510.00', '7,880.00', 4);
  account(9, 'O', 'Electric Expense', '520.00', '430.00', 4);
  account(16, 'O', 'Supplies Expense', '530.00', '930.00', 4);
  account(23, 'O', 'Insurance Expense', '540.00', '562.50', 4);
  account(30, 'O', 'Depreciation Expense', '550.00', '210.00', 3);
  account(36, 'O', 'Bank Fee Expense', '560.00', '25.00', 3);
  account(42, 'O', 'Payroll Taxes Expense', '570.00', '713.92', 3);
  account(48, 'O', 'Miscellaneous Expense', '580.00', '55.00', 3);

  // Post closing trial balance
  lattice(1, 25, 'V', 'Y'); outline(1, 3, 'V', 'Y'); outline(4, 4, 'V', 'Y'); outline(5, 25, 'V', 'Y');
  banner(1, 'V', 'Y', 'KJO Withholdings', 'bo'); banner(2, 'V', 'Y', 'Post Closing Trial Balance', 'bo'); banner(3, 'V', 'Y', 'For Period Ended May 31', 'bo');
  put(4, 'V', 'Account', 'bo'); put(4, 'W', 'Act. #', 'bo ce'); put(4, 'X', 'Debit', 'bo ce'); put(4, 'Y', 'Credit', 'bo ce');

  at(48, col('D')).k += ' active-cell';

  // Rows whose text sits at the top of the cell
  const LIFT = new Set([1, 2, 3, 4, 6, 9, 10, 17, 18, 19, 20, 25, 37, 41, 42]);
  let h = '<colgroup><col style="width:30px">' + WIDTHS.map(w => `<col style="width:${w}px">`).join('') + '<col></colgroup>';
  h += '<thead><tr><th><div class="corner-mark"></div></th>' + [...NAMES].map(n => `<th${n === 'D' ? ' class="sel"' : ''}>${n}</th>`).join('') + '</tr></thead><tbody>';
  for (let r = 1; r <= LAST; r++) {
    h += `<tr${LIFT.has(r) ? ' class="lift"' : ''}><th${r === 48 ? ' class="sel"' : ''}>${r}</th>`;
    for (let c = 0; c < 26;) {
      const x = at(r, c), e = at(r, c + x.span - 1);
      h += `<td class="r${e.R}b${x.B}${x.k}"${x.span > 1 ? ` colspan="${x.span}"` : ''}>${x.t}</td>`;
      c += x.span;
    }
    h += '</tr>';
  }
  document.getElementById('sheet').innerHTML = h + '</tbody>';
</script>
<script src="https://cdn.jsdelivr.net/npm/bootstrap@5.3.0/dist/js/bootstrap.bundle.min.js"></script>
</body>
</html>
